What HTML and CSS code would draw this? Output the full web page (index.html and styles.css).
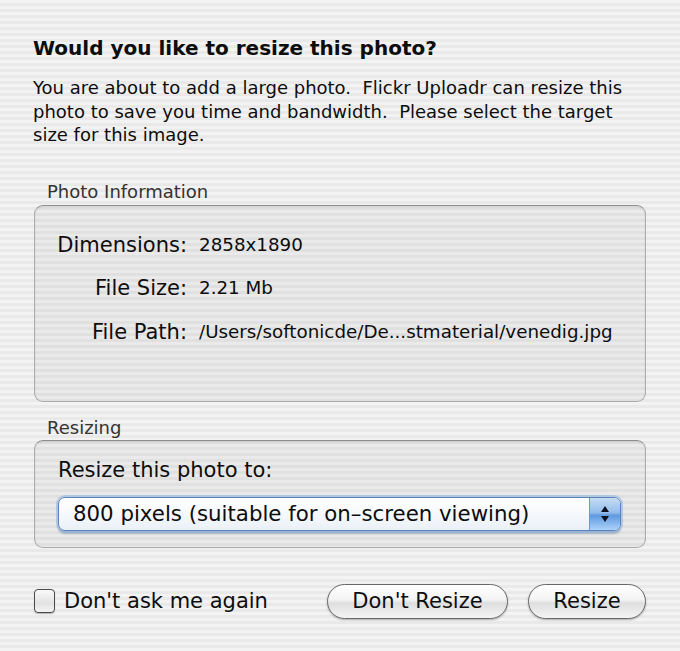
FILE: index.html
```html
<!DOCTYPE html>
<html>
<head>
<meta charset="utf-8">
<link rel="stylesheet" href="styles.css">
</head>
<body>
<div class="dialog">
  <h1 class="title">Would you like to resize this photo?</h1>
  <p class="intro">You are about to add a large photo.&nbsp; Flickr Uploadr can resize this<br>photo to save you time and bandwidth.&nbsp; Please select the target<br>size for this image.</p>

  <div class="group-label info-label">Photo Information</div>
  <div class="box info-box">
    <div class="info-grid">
      <div class="k">Dimensions:</div><div class="v">2858x1890</div>
      <div class="k">File Size:</div><div class="v">2.21 Mb</div>
      <div class="k">File Path:</div><div class="v">/Users/softonicde/De...stmaterial/venedig.jpg</div>
    </div>
  </div>

  <div class="group-label resize-label">Resizing</div>
  <div class="box resize-box">
    <div class="resize-to">Resize this photo to:</div>
    <div class="popup">
      <span class="popup-text">800 pixels (suitable for on&#8211;screen viewing)</span>
      <span class="popup-arrows">
        <svg width="10" height="22" viewBox="0 0 10 22"><path d="M5 3 L9 9 L1 9 Z" fill="#101020"/><path d="M5 19 L9 13 L1 13 Z" fill="#101020"/></svg>
      </span>
    </div>
  </div>

  <div class="footer">
    <label class="check"><span class="checkbox"></span><span class="check-text">Don't ask me again</span></label>
    <div class="buttons">
      <button class="btn btn-wide">Don't Resize</button>
      <button class="btn btn-narrow">Resize</button>
    </div>
  </div>
</div>
</body>
</html>
```

FILE: styles.css
```css
html, body {
  margin: 0;
  padding: 0;
}
body {
  width: 680px;
  height: 651px;
  overflow: hidden;
  font-family: "DejaVu Sans", "Liberation Sans", sans-serif;
  color: #0d0d0d;
  background: repeating-linear-gradient(to bottom, #f3f3f3 0px, #f3f3f3 3px, #e9e9e9 3px, #e9e9e9 6px);
}
.dialog {
  padding: 35px 34px 0 33px;
}
.title {
  margin: 0;
  font-size: 20px;
  font-weight: bold;
  line-height: 26px;
}
.intro {
  margin: 15px 0 0 0;
  font-size: 18px;
  line-height: 23.5px;
  white-space: nowrap;
}
.group-label {
  font-size: 18px;
  color: #333;
  padding-left: 14px;
  line-height: 22px;
}
.info-label {
  margin-top: 34px;
}
.box {
  margin-left: 1px;
  border: 1px solid #ababab;
  border-top-color: #8c8c8c;
  border-radius: 9px;
  background: rgba(0, 0, 0, 0.035);
  box-shadow: inset 0 1px 2px rgba(0,0,0,0.10);
}
.info-box {
  margin-top: 2px;
  height: 197px;
  box-sizing: border-box;
  padding-top: 25px;
}
.info-grid {
  display: grid;
  grid-template-columns: 152px auto;
  column-gap: 12px;
  row-gap: 15.5px;
  align-items: center;
}
.k {
  text-align: right;
  font-size: 21px;
  line-height: 28px;
}
.v {
  font-size: 18.3px;
  line-height: 28px;
}
.resize-label {
  margin-top: 15px;
}
.resize-box {
  margin-top: 1px;
  height: 108px;
  box-sizing: border-box;
  padding: 16px 0 0 23px;
}
.resize-to {
  font-size: 21px;
  line-height: 26px;
}
.popup {
  margin-top: 14px;
  width: 563px;
  height: 34px;
  box-sizing: border-box;
  border: 1px solid #5b84bb;
  border-radius: 7px;
  background: linear-gradient(to bottom, #ffffff 0%, #f6f9fc 50%, #eaf0f7 100%);
  box-shadow: 0 0 0 2px rgba(140,180,228,0.55), 0 3px 2px rgba(60,90,130,0.35);
  display: flex;
  align-items: center;
  overflow: hidden;
}
.popup-text {
  flex: 1;
  padding-left: 14px;
  font-size: 21.3px;
  line-height: 32px;
}
.popup-arrows {
  width: 30px;
  align-self: stretch;
  display: flex;
  align-items: center;
  justify-content: center;
  border-left: 1px solid #7098cc;
  background: linear-gradient(to bottom, #c6dcf5 0%, #94bdeb 45%, #5f9ae0 55%, #acd2f9 100%);
}
.footer {
  margin-top: 36px;
  display: flex;
  align-items: center;
  justify-content: space-between;
}
.check {
  display: flex;
  align-items: center;
  gap: 9px;
  margin-left: 1px;
}
.checkbox {
  width: 21px;
  height: 24px;
  box-sizing: border-box;
  border: 1.5px solid #4a4a4a;
  border-radius: 4px;
  background: linear-gradient(to bottom, #fafafa, #e2e2e2 60%, #f4f4f4);
  box-shadow: 0 1px 1px rgba(0,0,0,0.25);
}
.check-text {
  font-size: 21px;
}
.buttons {
  display: flex;
  gap: 20px;
}
.btn {
  font-family: "DejaVu Sans", "Liberation Sans", sans-serif;
  font-size: 21px;
  color: #0d0d0d;
  height: 35px;
  border: 1.5px solid #676767;
  border-radius: 18px;
  background: linear-gradient(to bottom, #ffffff 0%, #f3f3f3 45%, #dedede 55%, #f5f5f5 100%);
  box-shadow: 0 1px 2px rgba(0,0,0,0.3);
  padding: 0;
  line-height: 32px;
}
.btn-wide { width: 181px; }
.btn-narrow { width: 118px; }
```
